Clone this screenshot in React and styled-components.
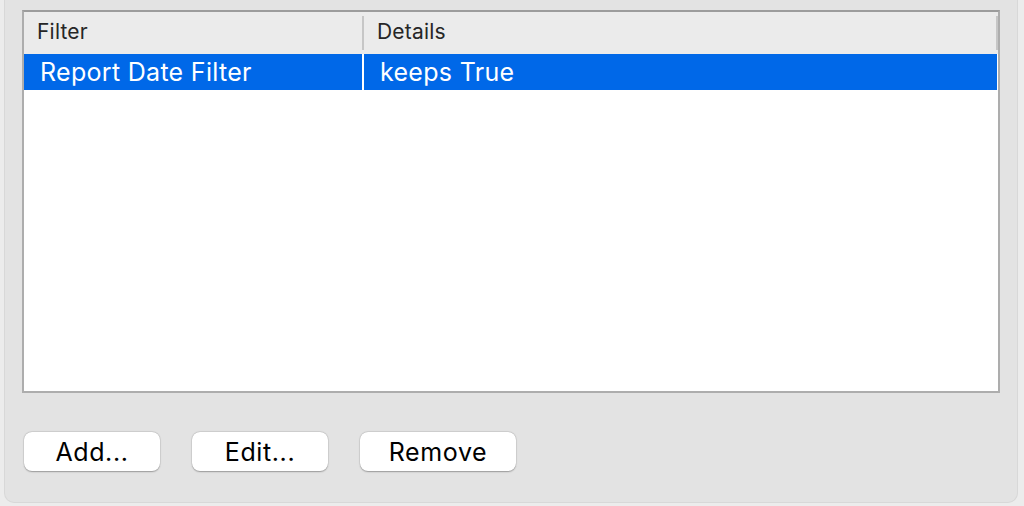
import React from 'react'
import styled, { createGlobalStyle } from 'styled-components'

const GlobalStyle = createGlobalStyle`
  html, body {
    margin: 0;
    padding: 0;
    background: #ececec;
    font-family: Inter, "Liberation Sans", sans-serif;
    -webkit-font-smoothing: antialiased;
  }
`

const Page = styled.div`
  width: 1024px;
  height: 506px;
  padding: 0 6px 3px 4px;
  box-sizing: border-box;
  display: flex;
`

const GroupBox = styled.div`
  flex: 1;
  display: flex;
  flex-direction: column;
  background: #e3e3e3;
  border: 1px solid #d8d8d8;
  border-top: none;
  border-radius: 0 0 10px 10px;
  padding: 10px 17px 31px 17px;
`

const Table = styled.div`
  height: 383px;
  display: flex;
  flex-direction: column;
  background: #fff;
  border: 2px solid #adadad;
  border-top-color: #9c9c9c;
  box-sizing: border-box;
`

const HeaderRow = styled.div`
  display: flex;
  height: 42px;
  background: #ebebeb;
  align-items: center;
`

const HeaderCell = styled.div`
  width: ${p => p.$width ? p.$width + 'px' : 'auto'};
  flex: ${p => p.$width ? 'none' : 1};
  height: 34px;
  display: flex;
  align-items: center;
  padding: 0 0 3px 13px;
  box-sizing: border-box;
  font-size: 21px;
  letter-spacing: 0.2px;
  color: #262626;
  border-right: 2px solid #c6c6c6;
`

const Row = styled.div`
  display: flex;
  height: 36px;
  background: ${p => p.$selected ? '#0068e8' : '#fff'};
  color: ${p => p.$selected ? '#fff' : '#000'};
  margin-right: 1px;
`

const Cell = styled.div`
  width: ${p => p.$width ? p.$width + 'px' : 'auto'};
  flex: ${p => p.$width ? 'none' : 1};
  display: flex;
  align-items: center;
  padding-left: 16px;
  box-sizing: border-box;
  font-size: 25px;
  letter-spacing: 0.3px;
  border-right: ${p => p.$sep ? '2px solid #fff' : 'none'};
`

const ButtonBar = styled.div`
  display: flex;
  gap: 32px;
  margin-top: 39px;
  padding-left: 2px;
`

const Button = styled.button`
  width: ${p => p.$width}px;
  height: 39px;
  background: #fff;
  border: none;
  border-radius: 8px;
  box-shadow: 0 0.5px 1.5px rgba(0, 0, 0, 0.3), 0 0 0 0.5px rgba(0, 0, 0, 0.08);
  font-family: inherit;
  font-size: 25px;
  letter-spacing: 0.6px;
  color: #000;
  padding: 0;
`

export default function App() {
  return (
    <>
      <GlobalStyle />
      <Page>
        <GroupBox>
          <Table>
            <HeaderRow>
              <HeaderCell $width={340}>Filter</HeaderCell>
              <HeaderCell>Details</HeaderCell>
            </HeaderRow>
            <Row $selected>
              <Cell $width={340} $sep>Report Date Filter</Cell>
              <Cell>keeps True</Cell>
            </Row>
          </Table>
          <ButtonBar>
            <Button $width={136}>Add...</Button>
            <Button $width={136}>Edit...</Button>
            <Button $width={156}>Remove</Button>
          </ButtonBar>
        </GroupBox>
      </Page>
    </>
  )
}
